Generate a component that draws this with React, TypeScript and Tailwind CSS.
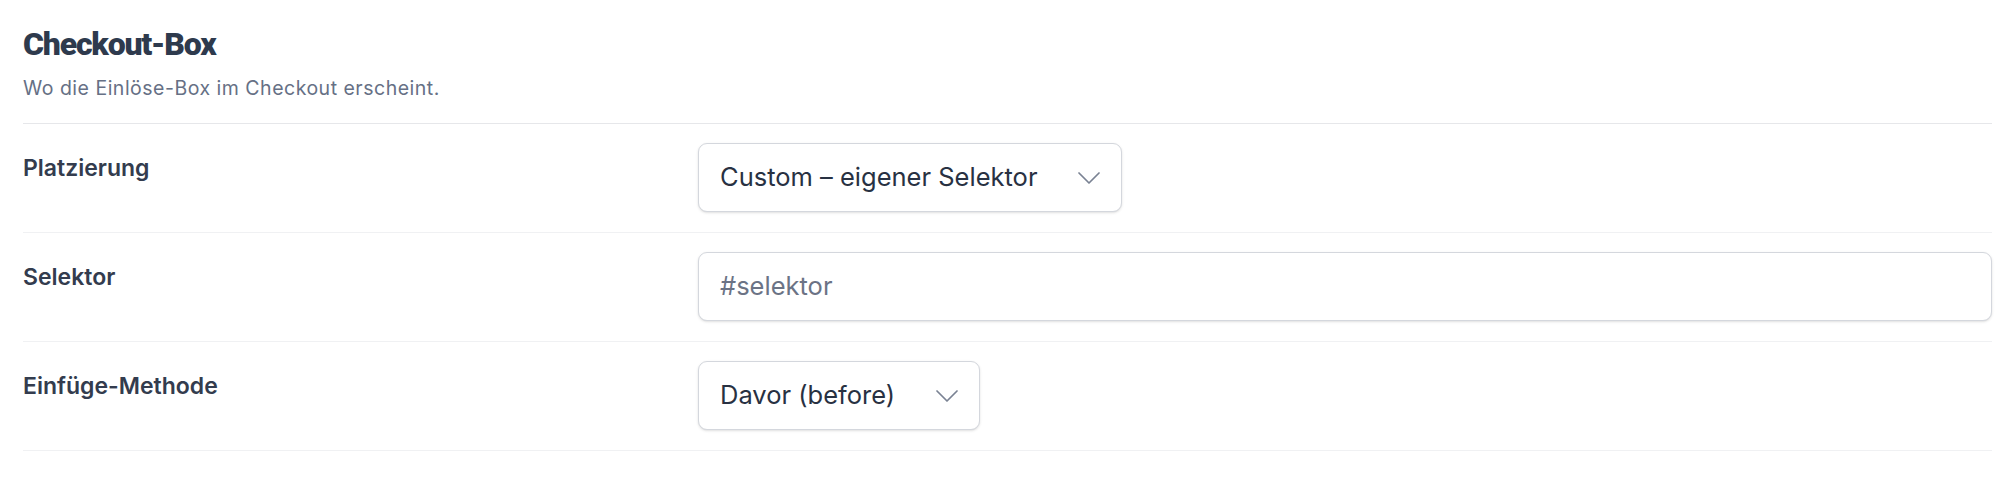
const inter = { fontFamily: "Inter, 'Noto Sans', sans-serif" };

function Chevron() {
  return (
    <svg width="22" height="12" viewBox="0 0 22 12" fill="none" className="shrink-0">
      <path d="M1 1l10 10L21 1" stroke="#7a8293" strokeWidth="1.7" strokeLinecap="round" strokeLinejoin="round" />
    </svg>
  );
}

function SelectBox({ value }: { value: string }) {
  return (
    <div className="inline-flex h-[69px] items-center gap-[41px] rounded-[9px] border border-[#d4d7dd] bg-white pl-[21px] pr-[21px] shadow-sm">
      <span className="text-[25.5px] text-[#283142] whitespace-nowrap">{value}</span>
      <Chevron />
    </div>
  );
}

function Row({ label, children }: { label: string; children: React.ReactNode }) {
  return (
    <div className="flex items-start border-b border-[#f0f1f3] pt-[19px] pb-[20px]">
      <div className="w-[675px] shrink-0 pt-[9px] text-[23px] leading-[32px] font-semibold text-[#333c4e]">
        {label}
      </div>
      <div className="flex flex-1">{children}</div>
    </div>
  );
}

export default function App() {
  return (
    <div className="min-h-screen bg-white pl-[23px] pr-[20px] pt-[25px]" style={inter}>
      <div className="border-b border-[#e6e7ea] pb-[22px]">
        <h2
          className="text-[32px] leading-[38px] font-black tracking-[-1.2px] text-[#2e3a4d]"
          style={{ fontFamily: "Roboto, 'Liberation Sans', sans-serif" }}
        >
          Checkout-Box
        </h2>
        <p className="mt-[12px] text-[19.5px] leading-[26px] tracking-[0.5px] text-[#667085]">
          Wo die Einlöse-Box im Checkout erscheint.
        </p>
      </div>

      <Row label="Platzierung">
        <SelectBox value="Custom – eigener Selektor" />
      </Row>

      <Row label="Selektor">
        <div className="flex h-[69px] flex-1 items-center rounded-[9px] border border-[#d4d7dd] bg-white pl-[21px] shadow-sm">
          <span className="text-[25.5px] text-[#6b7385]">#selektor</span>
        </div>
      </Row>

      <Row label="Einfüge-Methode">
        <SelectBox value="Davor (before)" />
      </Row>
    </div>
  );
}
